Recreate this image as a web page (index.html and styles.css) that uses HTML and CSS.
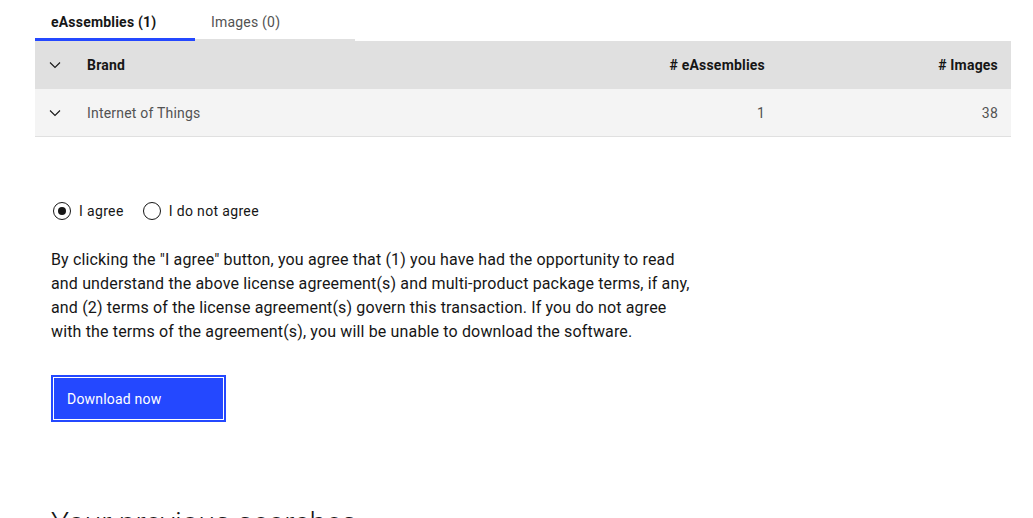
FILE: index.html
```html
<!DOCTYPE html>
<html lang="en">
<head>
<meta charset="utf-8">
<title>Download</title>
<link rel="stylesheet" href="styles.css">
</head>
<body>
<div class="page">
  <div class="tabs">
    <div class="tab tab-active">eAssemblies (1)</div>
    <div class="tab">Images (0)</div>
  </div>
  <div class="table">
    <div class="row row-head">
      <div class="cell cell-expand"><svg class="chev" width="12" height="8" viewBox="0 0 12 8"><path d="M1 1.5 L6 6.5 L11 1.5" fill="none" stroke="#161616" stroke-width="1.1"/></svg></div>
      <div class="cell">Brand</div>
      <div class="cell cell-num">#&nbsp;eAssemblies</div>
      <div class="cell cell-num">#&nbsp;Images</div>
    </div>
    <div class="row row-body">
      <div class="cell cell-expand"><svg class="chev" width="12" height="8" viewBox="0 0 12 8"><path d="M1 1.5 L6 6.5 L11 1.5" fill="none" stroke="#161616" stroke-width="1.1"/></svg></div>
      <div class="cell">Internet of Things</div>
      <div class="cell cell-num">1</div>
      <div class="cell cell-num">38</div>
    </div>
  </div>
  <div class="agree">
    <div class="radios">
      <label class="radio"><span class="radio-circle radio-checked"></span>I agree</label>
      <label class="radio"><span class="radio-circle"></span>I do not agree</label>
    </div>
    <p class="terms">By clicking the "I agree" button, you agree that (1) you have had the opportunity to read<br>and understand the above license agreement(s) and multi-product package terms, if any,<br>and (2) terms of the license agreement(s) govern this transaction. If you do not agree<br>with the terms of the agreement(s), you will be unable to download the software.</p>
    <button class="btn">Download now</button>
    <h2 class="prev">Your previous searches</h2>
  </div>
</div>
</body>
</html>
```
FILE: styles.css
```css
html, body {
  margin: 0;
  padding: 0;
  background: #ffffff;
  overflow: hidden;
}
body {
  font-family: Roboto, "Liberation Sans", sans-serif;
  color: #161616;
  width: 1033px;
  height: 518px;
}
.page {
  padding-left: 35px;
  width: 976px;
}
.tabs {
  display: flex;
  height: 41px;
}
.tab {
  width: 160px;
  box-sizing: border-box;
  padding: 14px 16px 0;
  font-size: 14px;
  color: #525252;
  border-bottom: 2px solid #e0e0e0;
  letter-spacing: 0.2px;
}
.tab-active {
  font-weight: 700;
  color: #161616;
  border-bottom: 3px solid #2448ff;
}
.table {
  display: flex;
  flex-direction: column;
}
.row {
  display: grid;
  grid-template-columns: 40px 1fr 220px 233px;
  align-items: center;
  height: 48px;
  font-size: 14px;
  letter-spacing: 0.2px;
  box-sizing: border-box;
}
.row-head {
  background: #e0e0e0;
  font-weight: 700;
  color: #161616;
}
.row-body {
  background: #f4f4f4;
  color: #525252;
  border-bottom: 1px solid #e0e0e0;
}
.cell {
  padding-left: 12px;
}
.cell-expand {
  padding-left: 0;
  display: flex;
  justify-content: center;
  align-items: center;
}
.chev {
  display: block;
}
.cell-num {
  text-align: right;
  padding-right: 13px;
}
.agree {
  padding-left: 16px;
  padding-top: 65px;
}
.radios {
  display: flex;
  gap: 19px;
  align-items: center;
  height: 18px;
  margin-left: 2px;
}
.radio {
  display: flex;
  align-items: center;
  gap: 8px;
  font-size: 14px;
  letter-spacing: 0.35px;
  color: #161616;
}
.radio-circle {
  width: 18px;
  height: 18px;
  box-sizing: border-box;
  border: 1px solid #161616;
  border-radius: 50%;
  display: flex;
  align-items: center;
  justify-content: center;
}
.radio-checked::after {
  content: "";
  width: 8px;
  height: 8px;
  border-radius: 50%;
  background: #161616;
}
.terms {
  margin: 28px 0 0;
  font-size: 16px;
  line-height: 24px;
  letter-spacing: 0.15px;
  color: #161616;
  white-space: nowrap;
}
.btn {
  display: block;
  margin-top: 31px;
  width: 175px;
  height: 47px;
  box-sizing: border-box;
  background: #2448ff;
  border: 2px solid #2448ff;
  box-shadow: inset 0 0 0 1px #ffffff;
  color: #ffffff;
  font-family: inherit;
  font-size: 14px;
  letter-spacing: 0.2px;
  text-align: left;
  padding: 0 14px;
}
.prev {
  margin: 81px 0 0;
  font-size: 30px;
  font-weight: 300;
  line-height: 40px;
  color: #161616;
}
```
